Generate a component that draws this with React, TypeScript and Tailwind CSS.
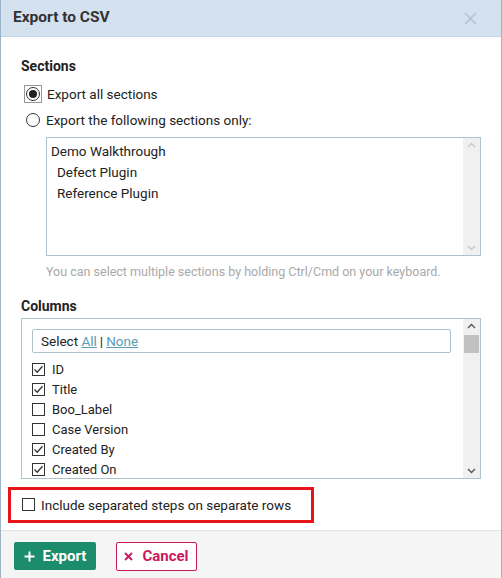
import React from 'react';

const sections = [
  { name: 'Demo Walkthrough', indent: false },
  { name: 'Defect Plugin', indent: true },
  { name: 'Reference Plugin', indent: true },
];

const columns = [
  { name: 'ID', checked: true },
  { name: 'Title', checked: true },
  { name: 'Boo_Label', checked: false },
  { name: 'Case Version', checked: false },
  { name: 'Created By', checked: true },
  { name: 'Created On', checked: true },
];

const Checkbox = ({ checked }: { checked: boolean }) => (
  <span className="w-[13px] h-[13px] border border-[#333] bg-white flex items-center justify-center shrink-0">
    {checked && (
      <svg width="11" height="11" viewBox="0 0 11 11">
        <path d="M1.5 5.5 L4.2 8.2 L9.5 2.2" fill="none" stroke="#333" strokeWidth="1.3" />
      </svg>
    )}
  </span>
);

const Radio = ({ checked }: { checked: boolean }) => (
  <span className="w-[14px] h-[14px] rounded-full border border-[#333] bg-white flex items-center justify-center shrink-0">
    {checked && <span className="w-[8px] h-[8px] rounded-full bg-[#222]" />}
  </span>
);

// Fake native scrollbar track with arrows
const ScrollTrack = ({ thumb }: { thumb?: boolean }) => (
  <div className="w-[17px] bg-[#f0f0f0] flex flex-col items-center justify-between py-[4px] shrink-0">
    <div className="flex flex-col items-center w-full">
      <svg width="9" height="6" viewBox="0 0 9 6">
        <path d="M1 5 L4.5 1.5 L8 5" fill="none" stroke={thumb ? '#555' : '#c8c8c8'} strokeWidth="1.4" />
      </svg>
      {thumb && <div className="mt-[6px] w-[15px] h-[18px] bg-[#c1c1c1]" />}
    </div>
    <svg width="9" height="6" viewBox="0 0 9 6">
      <path d="M1 1 L4.5 4.5 L8 1" fill="none" stroke={thumb ? '#555' : '#c8c8c8'} strokeWidth="1.4" />
    </svg>
  </div>
);

export default function App() {
  return (
    <div className="w-[502px] h-[578px] bg-white border-l border-r border-[#9db3c9] flex flex-col text-[#222] font-['Roboto',sans-serif] text-[13px] overflow-hidden">
      {/* Header */}
      <div className="h-[37px] bg-[#d3e2ee] border-b border-[#c3d4e2] flex items-center justify-between pl-[12px] pr-[24px] shrink-0">
        <h1 className="text-[15.5px] font-bold text-[#333]">Export to CSV</h1>
        <svg width="13" height="13" viewBox="0 0 13 13">
          <path d="M1 1 L12 12 M12 1 L1 12" stroke="#b4c2cf" strokeWidth="1.6" />
        </svg>
      </div>

      {/* Body */}
      <div className="flex-1 flex flex-col pl-[20px] pr-[20px] pt-[20px]">
        <h2 className="text-[14px] font-bold leading-[18px] text-[#222]">Sections</h2>
        <div className="mt-[9px] flex items-center gap-[6px] pl-[5px] h-[20px] text-[13.5px]">
          <span className="border border-[#999] p-[1px] -m-[2px] flex"><Radio checked={true} /></span>
          <span className="ml-[1px]">Export all sections</span>
        </div>
        <div className="mt-[6px] flex items-center gap-[6px] pl-[5px] h-[20px] text-[13.5px]">
          <Radio checked={false} />
          <span>Export the following sections only:</span>
        </div>

        <div className="ml-[25px] mt-[7px] h-[119px] border border-[#aec3cc] flex text-[13.5px]">
          <div className="flex-1 pt-[3px] leading-[21px]">
            {sections.map(s => (
              <div key={s.name} className={s.indent ? 'pl-[10px]' : 'pl-[4px]'}>{s.name}</div>
            ))}
          </div>
          <ScrollTrack />
        </div>
        <p className="ml-[25px] mt-[7px] text-[12.5px] text-[#a9a9a9]">
          You can select multiple sections by holding Ctrl/Cmd on your keyboard.
        </p>

        <h2 className="mt-[15px] text-[14px] font-bold leading-[18px] text-[#222]">Columns</h2>
        <div className="mt-[3px] h-[161px] border border-[#aec3cc] flex">
          <div className="flex-1 pl-[10px] pr-[12px] pt-[10px]">
            <div className="h-[24px] border border-[#aec3cc] rounded-[2px] flex items-center pl-[8px] text-[13.5px]">
              Select&nbsp;
              <a className="text-[#5b9bb6] underline">All</a>
              <span className="mx-[3px]">|</span>
              <a className="text-[#5b9bb6] underline">None</a>
            </div>
            <div className="mt-[7px] leading-[20px]">
              {columns.map(c => (
                <div key={c.name} className="flex items-center gap-[7px] h-[20px]">
                  <Checkbox checked={c.checked} />
                  <span>{c.name}</span>
                </div>
              ))}
            </div>
          </div>
          <ScrollTrack thumb />
        </div>

        <div className="-ml-[13px] mt-[8px] w-[306px] h-[36px] border-[3px] border-[#e8141a] flex items-center gap-[6px] pl-[11px] text-[13.5px]">
          <Checkbox checked={false} />
          <span>Include separated steps on separate rows</span>
        </div>
      </div>

      {/* Footer */}
      <div className="h-[48px] bg-[#f5f5f5] border-t border-[#dde3e8] flex items-start gap-[20px] pl-[13px] pt-[11px] shrink-0">
        <button className="h-[28px] w-[82px] bg-[#1b8c6c] text-white font-bold text-[15px] rounded-[2px] flex items-center justify-center gap-[8px]">
          <svg width="11" height="11" viewBox="0 0 11 11">
            <path d="M5.5 0.5 V10.5 M0.5 5.5 H10.5" stroke="white" strokeWidth="2" />
          </svg>
          Export
        </button>
        <button className="h-[29px] w-[81px] bg-white border border-[#c9195d] text-[#c9195d] font-bold text-[15px] rounded-[2px] flex items-center justify-center gap-[9px]">
          <svg width="9" height="9" viewBox="0 0 9 9">
            <path d="M1 1 L8 8 M8 1 L1 8" stroke="#c9195d" strokeWidth="1.8" />
          </svg>
          Cancel
        </button>
      </div>
    </div>
  );
}
